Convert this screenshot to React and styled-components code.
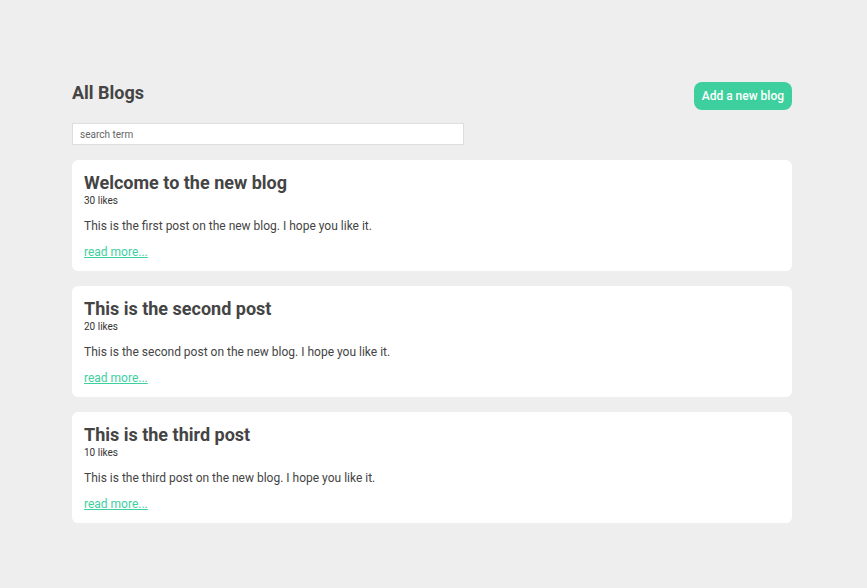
import React, { useState } from 'react';
import styled, { createGlobalStyle } from 'styled-components';

const GlobalStyle = createGlobalStyle`
  body {
    margin: 0;
    padding-right: 3px;
    background-color: #eeeeee;
    font-family: Roboto, "Liberation Sans", sans-serif;
    color: #444;
  }
`;

const Page = styled.div`
  width: 720px;
  margin: 0 auto;
  padding-top: 82px;
`;

const Header = styled.div`
  display: flex;
  justify-content: space-between;
  align-items: flex-start;
`;

const Title = styled.h2`
  margin: 0;
  font-size: 18px;
  line-height: 21px;
  font-weight: 700;
  color: #444;
`;

const AddButton = styled.button`
  height: 28px;
  padding: 0 8px;
  border: none;
  border-radius: 8px;
  background-color: #3ecf9e;
  color: #fff;
  font-family: Roboto, "Liberation Sans", sans-serif;
  font-size: 12px;
  font-weight: 500;
  cursor: pointer;
`;

const Search = styled.input`
  display: block;
  box-sizing: border-box;
  width: 392px;
  height: 22px;
  margin: 13px 0 15px;
  padding: 0 7px;
  border: 1px solid #dddddd;
  background: #fff;
  font-family: Roboto, "Liberation Sans", sans-serif;
  font-size: 10px;
  color: #444;
  outline: none;

  &::placeholder {
    color: #666;
  }
`;

const List = styled.div`
  display: flex;
  flex-direction: column;
  gap: 15px;
`;

const Card = styled.div`
  background: #fff;
  border-radius: 6px;
  padding: 12px 12px 11px;
  font-size: 12px;
  line-height: 16px;
`;

const PostTitle = styled.h3`
  margin: 0;
  font-size: 18px;
  line-height: 21px;
  font-weight: 700;
  color: #444;
`;

const Likes = styled.div`
  margin-top: 1px;
  font-size: 10px;
  line-height: 14px;
  color: #333;
`;

const Body = styled.p`
  margin: 10px 0 0;
  font-size: 12px;
  line-height: 16px;
  color: #444;
`;

const ReadMore = styled.a`
  display: block;
  width: fit-content;
  margin-top: 10px;
  font-size: 12px;
  line-height: 16px;
  color: #3ecf9e;
  text-decoration: underline;
  cursor: pointer;
`;

const posts = [
  { title: 'Welcome to the new blog', likes: 30, body: 'This is the first post on the new blog. I hope you like it.' },
  { title: 'This is the second post', likes: 20, body: 'This is the second post on the new blog. I hope you like it.' },
  { title: 'This is the third post', likes: 10, body: 'This is the third post on the new blog. I hope you like it.' },
];

export default function App() {
  const [term, setTerm] = useState('');

  const shown = posts.filter((p) => p.title.toLowerCase().includes(term.toLowerCase()));

  return (
    <>
      <GlobalStyle />
      <Page>
        <Header>
          <Title>All Blogs</Title>
          <AddButton>Add a new blog</AddButton>
        </Header>
        <Search placeholder="search term" value={term} onChange={(e) => setTerm(e.target.value)} />
        <List>
          {shown.map((post) => (
            <Card key={post.title}>
              <PostTitle>{post.title}</PostTitle>
              <Likes>{post.likes} likes</Likes>
              <Body>{post.body}</Body>
              <ReadMore>read more...</ReadMore>
            </Card>
          ))}
        </List>
      </Page>
    </>
  );
}
